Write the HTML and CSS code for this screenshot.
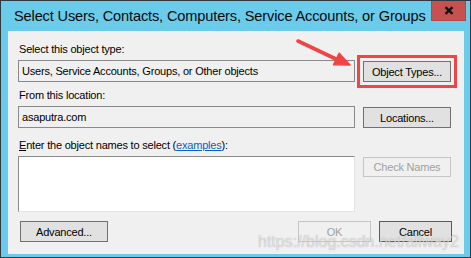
FILE: index.html
```html
<!DOCTYPE html>
<html lang="en">
<head>
    <meta charset="UTF-8">
    <title>Select Users, Contacts, Computers, Service Accounts, or Groups</title>
    <link rel="stylesheet" href="styles.css">
</head>
<body>
    <div class="window">
        <div class="titlebar">
            <span class="title">Select Users, Contacts, Computers, Service Accounts, or Groups</span>
            <button class="close-btn" title="Close">
                <svg width="10" height="9" viewBox="0 0 10 9">
                    <path d="M1.5 1.2 L8.5 7.8 M8.5 1.2 L1.5 7.8" stroke="#111" stroke-width="2.4" fill="none"/>
                </svg>
            </button>
        </div>

        <div class="content">
            <div class="label">Select this object type:</div>
            <div class="row">
                <div class="field readonly">Users, Service Accounts, Groups, or Other objects</div>
                <button class="btn side-btn highlighted">Object Types...</button>
            </div>

            <div class="label label-gap">From this location:</div>
            <div class="row">
                <div class="field readonly">asaputra.com</div>
                <button class="btn side-btn">Locations...</button>
            </div>

            <div class="label label-gap2"><u>E</u>nter the object names to select (<a href="#" class="link">examples</a>):</div>
            <div class="row">
                <textarea class="names"></textarea>
                <button class="btn side-btn check-btn" disabled>Check Names</button>
            </div>

            <div class="footer">
                <button class="btn advanced-btn">Advanced...</button>
                <div class="spacer"></div>
                <button class="btn small-btn" disabled>OK</button>
                <button class="btn small-btn default">Cancel</button>
            </div>
        </div>

        <svg class="arrow" width="471" height="258" viewBox="0 0 471 258">
            <line x1="298" y1="41" x2="338" y2="60" stroke="#ee4545" stroke-width="3.6" stroke-linecap="round"/>
            <polygon points="350,65 333.5,64.8 339.2,53.2" fill="#ee4545" stroke="#ee4545" stroke-width="1.5" stroke-linejoin="round"/>
        </svg>

        <div class="watermark">https://blog.csdn.net/allway2</div>
    </div>
</body>
</html>
```

FILE: styles.css
```css
* {
    box-sizing: border-box;
}

body {
    margin: 0;
    font-family: 'Liberation Sans', Arial, sans-serif;
    background: #6bcbea;
}

.window {
    position: relative;
    width: 471px;
    height: 258px;
    border: 1px solid #2f3a40;
    background: #6bcbea;
    display: flex;
    flex-direction: column;
}

.titlebar {
    height: 30px;
    display: flex;
    align-items: flex-start;
}

.title {
    padding-left: 13px;
    padding-top: 7px;
    font-size: 14.6px;
    color: #0a0a0a;
    letter-spacing: -0.15px;
    white-space: nowrap;
    overflow: hidden;
}

.close-btn {
    flex-shrink: 0;
    margin-left: auto;
    margin-right: 4px;
    width: 35px;
    height: 20px;
    border: 1px solid #b04848;
    border-top: none;
    background: #c75050;
    padding: 0;
    display: flex;
    align-items: center;
    justify-content: center;
}

.content {
    flex: 1;
    margin: 0 6px 3px 7px;
    background: #f0f0f0;
    padding: 11px 12px 0 10px;
    font-size: 11px;
    letter-spacing: -0.2px;
    color: #000;
}

.label {
    height: 15px;
    line-height: 15px;
    margin-left: 1px;
    white-space: nowrap;
}

.label-gap {
    margin-top: 6px;
}

.label-gap2 {
    margin-top: 10px;
}

.link {
    color: #0066cc;
}

.row {
    display: flex;
    align-items: flex-start;
    gap: 8px;
    margin-top: 3px;
}

.field {
    width: 337px;
    height: 22px;
    line-height: 20px;
    padding: 0 3px;
    border: 1px solid #8a8a8a;
    white-space: nowrap;
    overflow: hidden;
}

.readonly {
    background: #f0f0f0;
}

.names {
    width: 337px;
    height: 56px;
    border: 1px solid #e3e3e3;
    border-top-color: #8a8a8a;
    border-left-color: #8a8a8a;
    background: #fff;
    resize: none;
    margin: 0;
}

.btn {
    font-family: 'Liberation Sans', Arial, sans-serif;
    font-size: 11px;
    letter-spacing: -0.2px;
    color: #000;
    background: #e1e1e1;
    border: 1px solid #707070;
    height: 21px;
    padding: 0;
}

.btn:disabled {
    color: #a0a0a0;
    background: #f0f0f0;
    border-color: #c6c6c6;
}

.side-btn {
    width: 88px;
    margin-top: 1px;
}

.check-btn {
    height: 20px;
}

.highlighted {
    outline: 3px solid #ee4545;
    outline-offset: 3px;
}

.footer {
    display: flex;
    gap: 8px;
    margin-top: 9px;
}

.advanced-btn {
    width: 88px;
    margin-left: 2px;
}

.spacer {
    flex: 1;
}

.small-btn {
    width: 73px;
}

.default {
    border-color: #5a5a5a;
}

.arrow {
    position: absolute;
    left: -1px;
    top: -1px;
    pointer-events: none;
}

.watermark {
    position: absolute;
    left: 257px;
    top: 233px;
    font-size: 16px;
    line-height: 16px;
    color: rgba(255, 255, 255, 0.55);
    text-shadow: 0 0 1px rgba(120, 120, 120, 0.6);
    white-space: nowrap;
    pointer-events: none;
}
```
